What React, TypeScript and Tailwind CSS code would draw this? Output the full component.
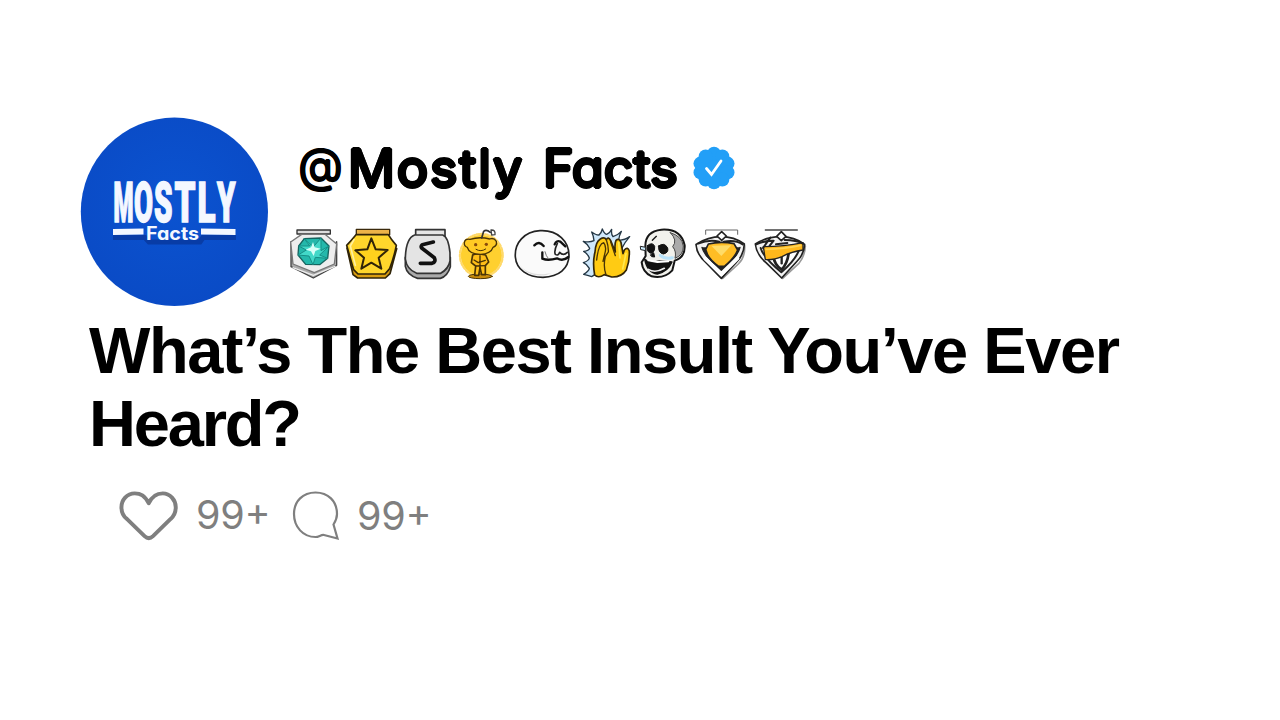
import type { ReactNode } from "react";

interface AwardProps {
  viewBox: string;
  className: string;
  children: ReactNode;
}

function Award({ viewBox, className, children }: AwardProps) {
  return (
    <svg viewBox={viewBox} className={`h-[55px] shrink-0 ${className}`} fill="none" strokeLinejoin="round" strokeLinecap="round">
      {children}
    </svg>
  );
}

const logoLetters = [
  { char: "M", x: 113.5, width: 20 },
  { char: "O", x: 134, width: 19 },
  { char: "S", x: 154, width: 18.5 },
  { char: "T", x: 174.5, width: 21 },
  { char: "L", x: 197.5, width: 18 },
  { char: "Y", x: 217, width: 18.5 },
];

function Avatar() {
  return (
    <svg viewBox="80 117 189 190" className="h-[190px] w-[189px] shrink-0">
      <defs>
        <radialGradient id="disc" cx="50%" cy="45%" r="55%">
          <stop offset="0" stopColor="#0b53d0" />
          <stop offset="1" stopColor="#0a4bc6" />
        </radialGradient>
      </defs>
      <ellipse cx="174.4" cy="211.8" rx="93.6" ry="94.2" fill="url(#disc)" />
      <path d="M113 237.5H145L149 242H200L203 237.5H236" stroke="#083ca6" strokeWidth="5" fill="none" />
      <g fill="#f4f8ff" stroke="#f4f8ff" strokeWidth="1.6" fontFamily="Roboto, sans-serif" fontWeight="900" fontSize="55">
        {logoLetters.map((l) => (
          <text key={l.char} x={l.x} y="222" textLength={l.width} lengthAdjust="spacingAndGlyphs">
            {l.char}
          </text>
        ))}
      </g>
      <path d="M113 229L143.5 228.5V234.5L113 235ZM201 228.5L235.5 229V235L201 234.5Z" fill="#f4f8ff" />
      <text x="146" y="239.5" textLength="53" lengthAdjust="spacingAndGlyphs" fill="#f4f8ff" fontFamily="Inter, sans-serif" fontWeight="700" fontSize="18.5" style={{ fontFeatureSettings: '"cv11"' }}>
        Facts
      </text>
    </svg>
  );
}

function VerifiedBadge() {
  const bumps = Array.from({ length: 10 }, (_, i) => (i * Math.PI) / 5 - Math.PI / 2);
  return (
    <svg viewBox="0 0 44 44" className="size-[44px] shrink-0">
      <g fill="#229ff7">
        <circle cx="22" cy="22" r="18" />
        {bumps.map((a) => (
          <circle key={a} cx={22 + 14.2 * Math.cos(a)} cy={22 + 14.2 * Math.sin(a)} r="7" />
        ))}
      </g>
      <path d="M14.5 22.5L19.5 28.5L29 15" fill="none" stroke="#fff" strokeWidth="2.8" strokeLinecap="round" />
    </svg>
  );
}

function Awards() {
  return (
    <div className="flex">
      <Award viewBox="9 18 156 165" className="w-[52px]">
        <path d="M36 30H136V42H36Z" fill="#ddd" stroke="#333" strokeWidth="4" />
        <path d="M18 65L18 140L85 174L155 136V65" fill="#aaa" stroke="#444" strokeWidth="4" />
        <path d="M50 43L120 43L155 72L148 132L88 158L24 132L17 66Z" fill="#eee" stroke="#777" strokeWidth="4" />
        <path d="M58 56L108 54L132 78L128 115L104 134L62 133L39 105L41 78Z" fill="#24b8ab" stroke="#16645f" strokeWidth="4" />
        <path d="M58 56L84 82L108 54L108 92L132 78L104 105L128 115L91 112L84 134L72 108L39 105L64 90L41 78L73 78Z" fill="#42d8c8" stroke="#168f86" strokeWidth="3" />
        <path d="M84 66L89 82L107 86L91 93L86 108L78 94L62 89L78 82Z" fill="#d7fff8" />
        <path d="M24 143L85 166L150 139" stroke="#eee" strokeWidth="4" />
      </Award>
      <Award viewBox="180 18 162 165" className="ml-[5px] w-[54px]">
        <path d="M214 28H314V44H214Z" fill="#edb348" stroke="#3a290b" strokeWidth="4" />
        <path d="M186 84L204 164L218 174H301L315 161L335 86Z" fill="#d99d10" stroke="#302408" strokeWidth="5" />
        <path d="M213 44H310Q318 58 334 76Q327 112 314 146L300 162H219L206 149Q195 112 185 76Q200 60 213 44Z" fill="#ffd62c" stroke="#302408" strokeWidth="5" />
        <path d="M259 55L272 88L308 90L281 113L289 146L259 128L229 146L237 113L211 91L247 88Z" fill="#ffd21d" stroke="#302408" strokeWidth="6" />
        <path d="M207 59L196 78L211 136" stroke="#fff0a0" strokeWidth="5" />
      </Award>
      <Award viewBox="99 18 150 165" className="ml-[4px] w-[50px]">
        <path d="M137 50V29H225V50" fill="#e5e5e5" stroke="#333" strokeWidth="5" />
        <path d="M106 112V139Q111 165 143 175H211Q233 168 241 140V112" fill="#aaa" stroke="#333" strokeWidth="5" />
        <path d="M134 45H218Q235 50 240 98V123Q236 146 212 160H140Q110 148 106 117Q107 55 134 45Z" fill="#e4e4e4" stroke="#333" strokeWidth="5" />
        <path d="M190 66L157 74Q151 80 156 85L193 113Q199 126 186 130H151" stroke="#111" strokeWidth="11" />
      </Award>
      <Award viewBox="9 18 141 165" className="ml-[5px] w-[47px]">
        <circle cx="79" cy="106" r="62" fill="#ffd02f" />
        <circle cx="79" cy="106" r="64" stroke="#ffd96a" strokeWidth="7" strokeDasharray="7 6" />
        <ellipse cx="76" cy="169" rx="36" ry="7" fill="#c98c0c" stroke="#4a3405" strokeWidth="3" />
        <path d="M53 105Q63 98 92 105L101 126L91 137V164H80L75 143L71 166H59L62 138L49 128Z" fill="#ffbf18" stroke="#4a3405" strokeWidth="5" />
        <path d="M57 120L70 128L91 121M75 107V143M62 138L91 137" stroke="#4a3405" strokeWidth="4" />
        <path d="M45 58Q30 55 28 68Q27 79 37 82Q42 102 77 103Q108 101 114 82Q127 77 124 64Q117 52 104 57Q74 49 45 58Z" fill="#ffca24" stroke="#4a3405" strokeWidth="4" />
        <path d="M80 54L86 34Q94 27 106 37" stroke="#333" strokeWidth="5" />
        <path d="M108 30Q122 29 120 44L110 45Z" fill="#fff" stroke="#444" strokeWidth="4" />
        <circle cx="62" cy="74" r="5" fill="#8a4b0b" />
        <circle cx="94" cy="73" r="5" fill="#8a4b0b" />
        <path d="M63 88Q78 97 92 87" stroke="#4a3405" strokeWidth="3" />
      </Award>
      <Award viewBox="174 18 174 165" className="ml-[8px] w-[58px]">
        <path d="M181 111C178 68 208 35 255 32C310 29 342 66 342 106C341 146 312 171 264 172C218 172 184 149 181 111Z" fill="#fafafa" stroke="#222" strokeWidth="5" />
        <path d="M191 126C202 160 253 169 290 158C256 178 202 162 191 126Z" fill="#ddd" />
        <path d="M238 76Q252 61 266 78" stroke="#111" strokeWidth="7" />
        <path d="M299 73Q304 60 316 65L331 79" stroke="#111" strokeWidth="7" />
        <path d="M307 70Q296 94 301 103Q310 109 314 97Q325 109 337 97" stroke="#222" strokeWidth="5" />
        <path d="M262 97V116Q280 123 306 115Q324 125 340 111" stroke="#111" strokeWidth="7" />
        <path d="M270 95Q274 110 278 113" stroke="#777" strokeWidth="3" />
      </Award>
      <Award viewBox="21 18 147 165" className="ml-[11px] w-[49px]">
        <path
          d="M57 62Q56 48 50 36Q64 46 72 45Q80 37 82 27Q88 42 95 43Q106 38 110 28Q108 44 114 50Q128 46 139 34Q130 52 132 60Q146 62 164 50Q150 66 140 86L90 145L50 170Q38 166 26 163Q42 153 43 145Q37 133 25 128Q42 122 43 114Q38 101 26 94Q42 92 44 85Q38 72 25 64Q44 68 57 62Z"
          fill="#cfe8fb"
          stroke="#253846"
          strokeWidth="4"
        />
        <path d="M59 165Q52 128 60 96Q62 65 76 57Q88 50 94 59Q100 48 107 62L121 96Q118 72 123 61Q132 53 138 67L144 101L148 90Q158 79 163 93Q164 124 154 150Q140 172 110 171L88 164Q70 176 59 165Z" fill="#ffcb13" stroke="#342708" strokeWidth="5" />
        <path d="M65 120Q70 72 86 68Q94 78 91 94L84 124M94 59Q101 80 100 96L91 110Q84 140 93 164M107 65L121 107" stroke="#493406" strokeWidth="4" />
        <path d="M131 68L135 114M153 100L143 147" stroke="#ffe84f" strokeWidth="5" />
      </Award>
      <Award viewBox="192 18 141 165" className="ml-[8px] w-[47px]">
        <path d="M211 78Q211 34 259 29Q318 25 329 76Q331 112 299 122L292 151Q268 177 230 169Q203 157 200 127L212 108Z" fill="#f1f1ec" stroke="#161616" strokeWidth="6" />
        <path d="M286 38Q321 48 325 78Q326 105 300 115Q305 94 293 80Q309 61 286 38Z" fill="#aaa" stroke="#444" strokeWidth="3" />
        <path d="M217 77Q233 64 239 79Q240 97 228 100Q213 96 217 77ZM251 78Q268 65 278 84Q282 98 265 102Q249 99 251 78ZM227 104L236 98L239 111L231 110Z" fill="#111" stroke="#111" strokeWidth="3" />
        <path d="M209 118Q223 132 254 123L291 126Q279 155 247 162Q217 158 209 118Z" fill="#111" stroke="#111" strokeWidth="4" />
        <path d="M220 121L247 126L280 124" stroke="#fff" strokeWidth="6" />
        <path d="M220 148Q240 161 268 145" stroke="#eee" strokeWidth="5" />
        <path d="M256 106Q270 118 292 113" stroke="#b9e3fa" strokeWidth="9" />
        <path d="M197 79L212 82V92L198 89Z" fill="#c9e9fb" stroke="#222" strokeWidth="3" />
        <path d="M232 61L244 49" stroke="#111" strokeWidth="4" />
      </Award>
      <Award viewBox="12 18 156 165" className="ml-[8px] w-[52px]">
        <path d="M47 43V30H143V43" stroke="#666" strokeWidth="3" />
        <path d="M164 76Q166 112 145 132L98 175" stroke="#999" strokeWidth="5" />
        <path d="M18 73Q55 50 92 50Q133 50 163 72Q162 105 139 127L94 175L48 128Q20 104 18 73Z" fill="#f4f4f4" stroke="#222" strokeWidth="5" />
        <path d="M36 82Q42 108 94 155Q145 108 150 82" fill="#222" stroke="#222" strokeWidth="4" />
        <path d="M46 116L94 162L142 115" stroke="#fff" strokeWidth="12" />
        <path d="M55 72Q92 63 132 71L143 90Q134 114 103 139H86Q63 124 53 105L47 89Z" fill="#ffbd25" stroke="#222" strokeWidth="5" />
        <path d="M64 77L124 76L94 108Z" fill="#ffdc68" />
        <path d="M24 71Q56 58 88 65M101 65Q136 58 158 73" stroke="#222" strokeWidth="6" />
        <path d="M95 35L109 48L95 61L81 48Z" fill="#fff" stroke="#222" strokeWidth="5" />
      </Award>
      <Award viewBox="189 18 162 165" className="ml-[7px] w-[54px]">
        <path d="M226 30H322" stroke="#444" strokeWidth="4" />
        <path d="M346 78Q345 108 326 131L278 175" stroke="#999" strokeWidth="5" />
        <path d="M196 72Q230 50 272 50Q313 50 344 73Q343 103 319 126L275 174L228 128Q199 103 196 72Z" fill="#f4f4f4" stroke="#222" strokeWidth="5" />
        <path d="M212 84Q219 111 274 157Q321 116 329 84" fill="#fff" stroke="#222" strokeWidth="6" />
        <path d="M249 106Q254 137 275 149Q293 129 296 99" fill="#fff" stroke="#222" strokeWidth="8" />
        <path d="M275 108V130" stroke="#222" strokeWidth="7" />
        <path d="M220 80Q282 80 339 68V90Q304 95 276 110Q254 120 226 119Z" fill="#ffb81c" stroke="#222" strokeWidth="4" />
        <path d="M228 88Q287 86 332 76" stroke="#ffd454" strokeWidth="5" />
        <path d="M199 73Q225 61 251 62L239 77M258 73L292 69M284 60Q320 60 339 71M219 84L241 53" stroke="#222" strokeWidth="6" />
        <path d="M274 35L288 49L274 62L260 49Z" fill="#fff" stroke="#222" strokeWidth="5" />
      </Award>
    </div>
  );
}

// the shadows thicken the strokes evenly, which rounds off the letter ends
const rounded =
  "[text-shadow:1.8px_0_0_#000,-1.8px_0_0_#000,0_1.8px_0_#000,0_-1.8px_0_#000,1.3px_1.3px_0_#000,-1.3px_1.3px_0_#000,1.3px_-1.3px_0_#000,-1.3px_-1.3px_0_#000]";
const roundedThin =
  "[text-shadow:0.7px_0_0_#000,-0.7px_0_0_#000,0_0.7px_0_#000,0_-0.7px_0_#000]";

export default function App() {
  return (
    <main className="flex h-[720px] w-[1280px] flex-col overflow-hidden bg-white pt-[117px] font-['Liberation_Sans',sans-serif]">
      <header className="flex h-[190px] pl-[80px]">
        <Avatar />
        <div className="ml-[19px] flex flex-col pt-[20px]">
          <div
            className={`flex h-[62px] items-center pl-[10px] font-['Inter',sans-serif] text-[52px] leading-none font-normal whitespace-nowrap text-black [font-feature-settings:'cv11'] ${rounded}`}
          >
            <span className={`w-[50px] pb-[5px] text-[46.5px] ${roundedThin}`}>@</span>
            <span className="w-[195px] pt-[1px] tracking-[1.9px]">Mostly</span>
            <span className="w-[149px] pt-[1px] tracking-[0.1px]">Facts</span>
            <VerifiedBadge />
          </div>
          <div className="mt-[27px]">
            <Awards />
          </div>
        </div>
      </header>

      <h1 className="mt-[7px] ml-[89px] text-[65px] leading-[73px] font-bold tracking-[-1.45px] text-black">
        What’s The Best Insult You’ve Ever
        <br />
        <span className="tracking-[-2.2px]">Heard?</span>
      </h1>

      <footer className="mt-[28px] ml-[118px] flex h-[54px] items-center font-['Inter',sans-serif] text-[39.5px] leading-none tracking-[-0.2px] text-[#7f7f7f] [font-feature-settings:'case']">
        <svg viewBox="0 0 62 54" className="h-[54px] w-[61px]" fill="none" stroke="#7f7f7f" strokeWidth="4" strokeLinejoin="round">
          <path d="M31.3 15C27 7 23 5 17 5C9 5 3.5 12 3.5 19C3.5 24 5 28 9 31L27 48.5Q31.3 52.5 35.6 48.5L53.5 31C57 28 58.7 24 58.7 19C58.7 12 53 5 45.5 5C39.5 5 35 7 31.3 15Z" />
        </svg>
        <span className="ml-[17px] w-[73px] pt-[2px]">99+</span>
        <svg viewBox="0 0 50 54" className="ml-[22px] h-[54px] w-[50px]" fill="none" stroke="#7f7f7f" strokeWidth="2.2">
          <path d="M42.5 36.5C45 32.5 46 30 46 26C46 13 37 4.5 24.5 4.5C12 4.5 3 13 3 26C3 39 12 49 24.5 49C28 49 30 46.5 33 47L46.5 50.5Z" />
        </svg>
        <span className="ml-[16px] pt-[4px]">99+</span>
      </footer>
    </main>
  );
}
